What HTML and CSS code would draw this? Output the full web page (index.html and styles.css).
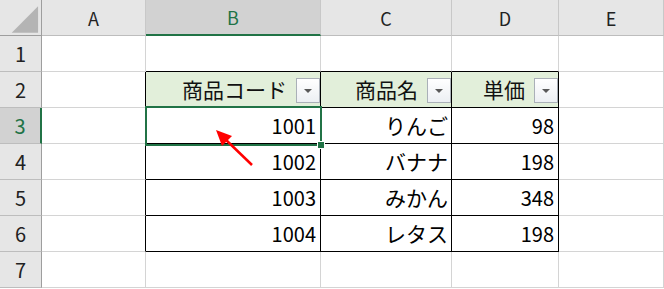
FILE: index.html
```html
<!DOCTYPE html>
<html lang="ja">
<head>
<meta charset="utf-8">
<link rel="stylesheet" href="styles.css">
</head>
<body>
<div class="sheet">
  <div class="hd corner"><svg class="tri" width="42" height="36" viewBox="0 0 42 36"><polygon points="12,33 39,33 39,6" fill="#b4b4b4"/></svg></div>
  <div class="hd col">A</div>
  <div class="hd col sel-col">B</div>
  <div class="hd col">C</div>
  <div class="hd col">D</div>
  <div class="hd col">E</div>

  <div class="hd row">1</div>
  <div class="c"></div>
  <div class="c tb-top"></div>
  <div class="c tb-top"></div>
  <div class="c tb-top"></div>
  <div class="c"></div>

  <div class="hd row">2</div>
  <div class="c tb-left"></div>
  <div class="c t th"><span>商品コード</span><i class="dd"></i></div>
  <div class="c t th"><span>商品名</span><i class="dd"></i></div>
  <div class="c t th"><span>単価</span><i class="dd"></i></div>
  <div class="c"></div>

  <div class="hd row sel-row">3</div>
  <div class="c tb-left"></div>
  <div class="c t num">1001</div>
  <div class="c t num jp">りんご</div>
  <div class="c t num">98</div>
  <div class="c"></div>

  <div class="hd row">4</div>
  <div class="c tb-left"></div>
  <div class="c t num">1002</div>
  <div class="c t num jp">バナナ</div>
  <div class="c t num">198</div>
  <div class="c"></div>

  <div class="hd row">5</div>
  <div class="c tb-left"></div>
  <div class="c t num">1003</div>
  <div class="c t num jp">みかん</div>
  <div class="c t num">348</div>
  <div class="c"></div>

  <div class="hd row">6</div>
  <div class="c tb-left"></div>
  <div class="c t num">1004</div>
  <div class="c t num jp">レタス</div>
  <div class="c t num">198</div>
  <div class="c"></div>

  <div class="hd row">7</div>
  <div class="c"></div>
  <div class="c"></div>
  <div class="c"></div>
  <div class="c"></div>
  <div class="c"></div>

  <div class="selection"><span class="handle"></span></div>
  <svg class="arrow" width="664" height="289" viewBox="0 0 664 289">
    <line x1="252" y1="165" x2="224" y2="138" stroke="#ff0000" stroke-width="2.5"/>
    <polygon points="216,130 232,136 222,146" fill="#ff0000"/>
  </svg>
</div>
</body>
</html>
```

FILE: styles.css
```css
html, body {
  margin: 0;
  padding: 0;
  background: #ffffff;
}
.sheet {
  position: relative;
  display: grid;
  grid-template-columns: 42px 104px 175px 131px 107px 105px;
  grid-template-rows: repeat(8, 36px);
  width: 664px;
  font-family: "Noto Sans CJK JP", "Noto Sans", sans-serif;
  font-size: 20px;
  color: #000;
}
.c, .hd {
  box-sizing: border-box;
  border-right: 1px solid #d4d4d4;
  border-bottom: 1px solid #d4d4d4;
}
.hd {
  background: #e6e6e6;
  border-right-color: #c8c8c8;
  border-bottom-color: #bdbdbd;
  display: flex;
  align-items: center;
  justify-content: center;
  font-size: 18px;
  color: #222;
  line-height: 1;
}
.row {
  border-right-color: #9e9e9e;
  font-size: 20px;
}
.corner {
  border-right-color: #9e9e9e;
  border-bottom-color: #9e9e9e;
  padding: 0;
}
.tri { display: block; }
.sel-col {
  background: #d2d2d2;
  color: #217346;
  border-bottom: 2px solid #217346;
}
.sel-row {
  background: #d2d2d2;
  color: #217346;
  border-right: 2px solid #217346;
}
.tb-top { border-bottom-color: #000; }
.tb-left { border-right-color: #000; }
.t {
  border-right-color: #000;
  border-bottom-color: #000;
}
.num {
  display: flex;
  align-items: center;
  justify-content: flex-end;
  padding-right: 4px;
  line-height: 1;
}
.jp {
  font-size: 21px;
  padding-right: 3px;
}
.th {
  background: #e2efda;
  display: flex;
  align-items: center;
  justify-content: flex-end;
  line-height: 1;
  font-size: 21px;
}
.th span {
  margin-right: 9px;
  color: #111;
}
.dd {
  box-sizing: border-box;
  width: 24px;
  height: 25px;
  margin-top: 2px;
  border: 1px solid #aab0b8;
  background: linear-gradient(#ffffff, #eceff3);
  position: relative;
  display: block;
}
.dd::after {
  content: "";
  position: absolute;
  left: 7px;
  top: 10px;
  border-left: 4px solid transparent;
  border-right: 4px solid transparent;
  border-top: 4px solid #595959;
}
.selection {
  position: absolute;
  left: 145px;
  top: 106px;
  width: 177px;
  height: 40px;
  box-sizing: border-box;
  border: 2px solid #217346;
}
.handle {
  position: absolute;
  right: -5px;
  bottom: -5px;
  width: 6px;
  height: 6px;
  background: #217346;
  border: 1px solid #fff;
}
.arrow {
  position: absolute;
  left: 0;
  top: 0;
  pointer-events: none;
}
```
